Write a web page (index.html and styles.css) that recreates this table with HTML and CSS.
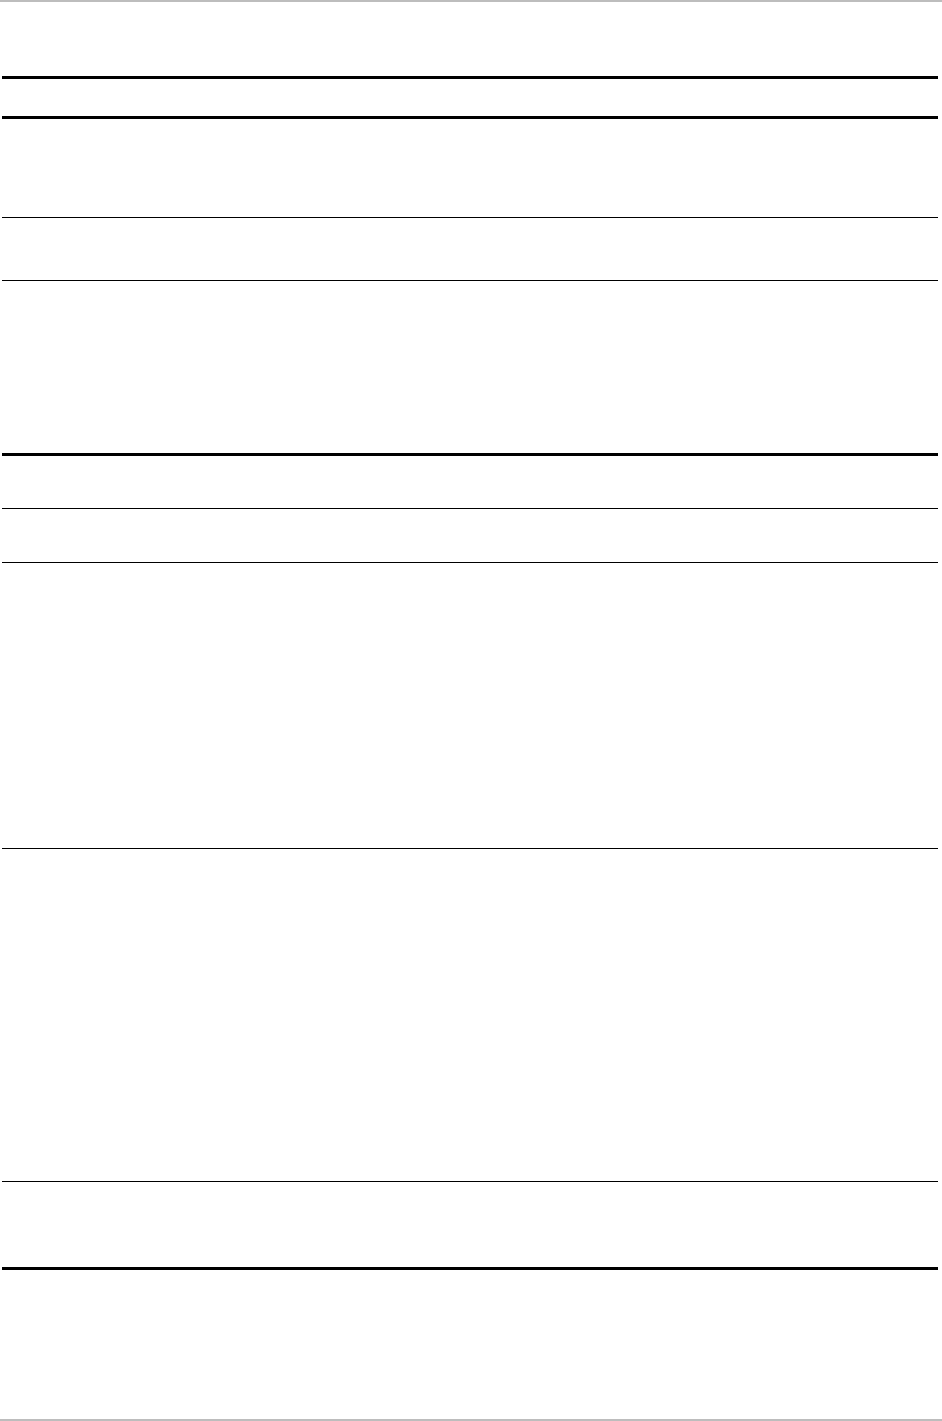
FILE: index.html
```html
<!DOCTYPE html>
<html lang="en">
<head>
  <meta charset="UTF-8" />
  <meta name="viewport" content="width=device-width, initial-scale=1.0" />
  <title>Table</title>
  <link rel="stylesheet" href="styles.css">
</head>
<body>
  <div class="page">
    <div class="table">
      <div class="row head"></div>
      <div class="row r1 thin"></div>
      <div class="row r2 thin"></div>
      <div class="row r3 thick"></div>
      <div class="row r4 thin"></div>
      <div class="row r5 thin"></div>
      <div class="row r6 thin"></div>
      <div class="row r7 thin"></div>
      <div class="row r8"></div>
    </div>
  </div>
</body>
</html>
```

FILE: styles.css
```css
* { box-sizing: border-box; }
body {
  margin: 0;
  background: #fff;
  color: #000;
  font-family: 'Liberation Serif', serif;
}

.page {
  height: 1421px;
  border-top: 2px solid #bdbdbd;
  border-bottom: 2px solid #bdbdbd;
  padding: 74px 4px 0 2px;
}

.table {
  border-top: 3px solid #000;
  border-bottom: 3px solid #000;
}

.row { width: 100%; }
.thin { border-bottom: 1px solid #000; }
.thick { border-bottom: 3px solid #000; }

.head { height: 40px; border-bottom: 3px solid #000; }
.r1 { height: 99px; }
.r2 { height: 63px; }
.r3 { height: 175px; }
.r4 { height: 53px; }
.r5 { height: 54px; }
.r6 { height: 286px; }
.r7 { height: 333px; }
.r8 { height: 85px; }
```
